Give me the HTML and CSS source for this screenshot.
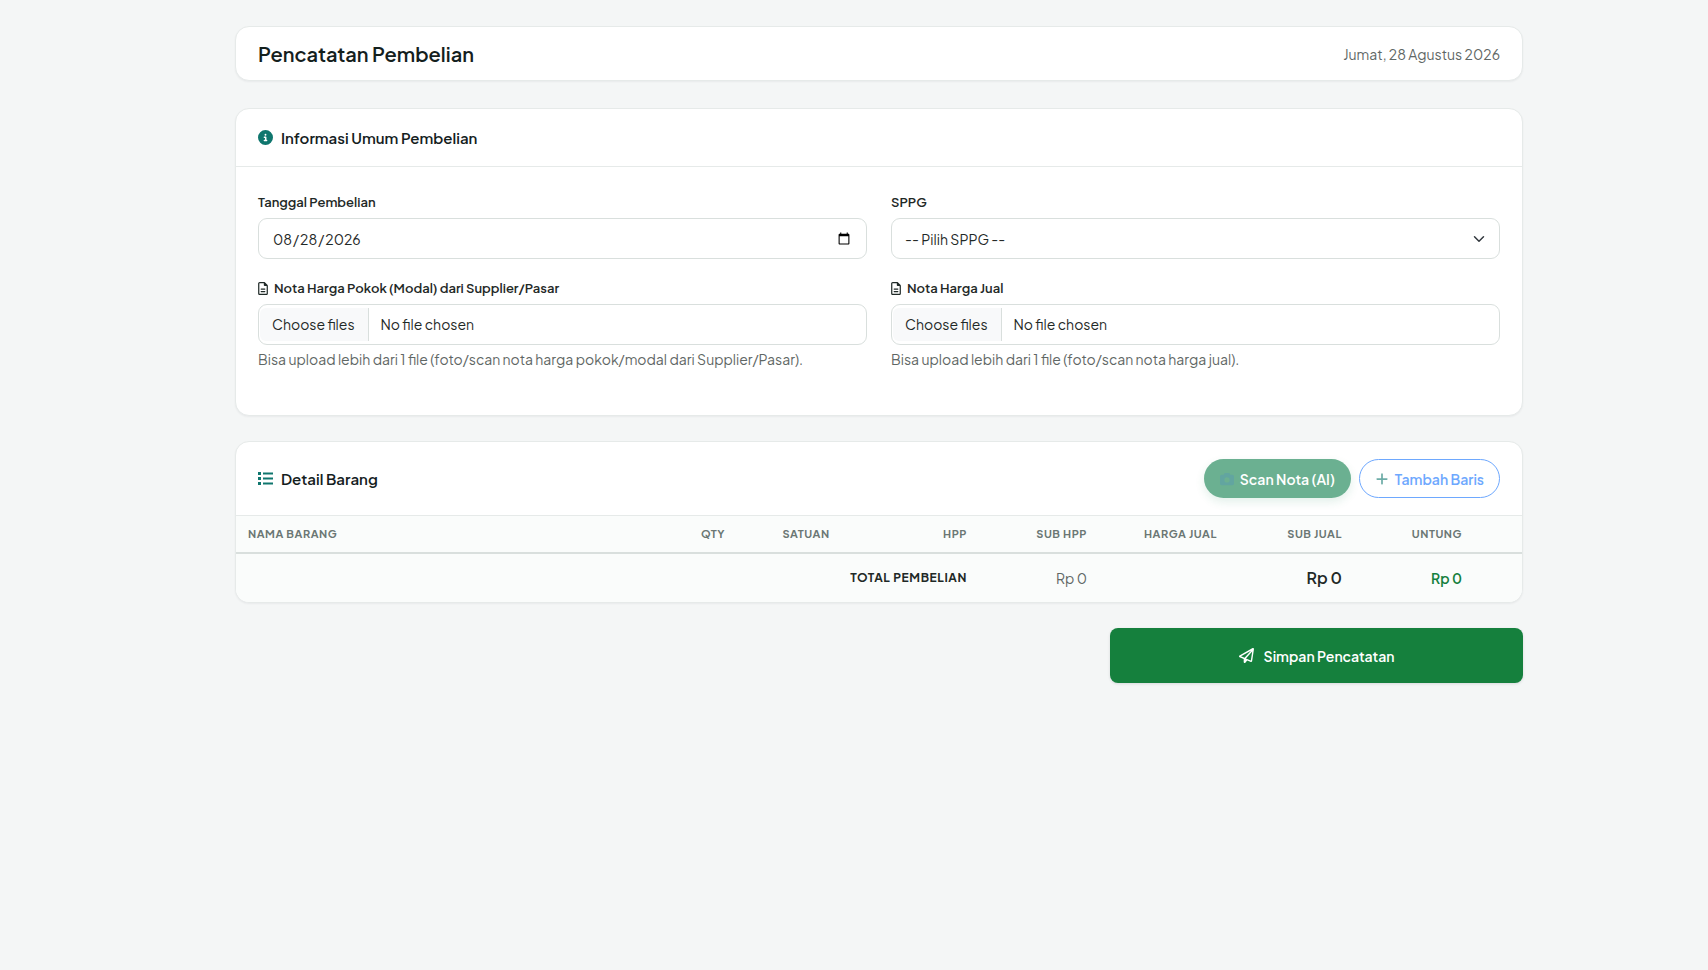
FILE: index.html
```html
<!DOCTYPE html>
<html lang="id">
<head>
    <meta charset="UTF-8">
    <meta name="viewport" content="width=device-width, initial-scale=1.0">
    <title>Pencatatan Pembelian</title>
    <link rel="stylesheet" href="styles.css">
</head>
<body>
    <main class="container">
        <header class="card page-header">
            <h1>Pencatatan Pembelian</h1>
            <span class="date">Jumat, 28 Agustus 2026</span>
        </header>

        <form class="form" action="#">
            <section class="card">
                <div class="card-header">
                    <h2>
                        <svg class="icon" viewBox="0 0 512 512"><path d="M256 512A256 256 0 1 0 256 0a256 256 0 1 0 0 512zM216 336h24V272H216c-13.3 0-24-10.7-24-24s10.7-24 24-24h48c13.3 0 24 10.7 24 24v88h8c13.3 0 24 10.7 24 24s-10.7 24-24 24H216c-13.3 0-24-10.7-24-24s10.7-24 24-24zm40-208a32 32 0 1 1 0 64 32 32 0 1 1 0-64z"/></svg>
                        Informasi Umum Pembelian
                    </h2>
                </div>
                <div class="card-body">
                    <div class="field">
                        <label for="tanggal">Tanggal Pembelian</label>
                        <input class="control" type="date" id="tanggal" value="2026-08-28">
                    </div>
                    <div class="field">
                        <label for="sppg">SPPG</label>
                        <select class="control" id="sppg">
                            <option>-- Pilih SPPG --</option>
                        </select>
                    </div>
                    <div class="field">
                        <label for="nota-pokok">
                            <svg class="icon-file" viewBox="0 0 384 512"><path d="M64 464c-8.8 0-16-7.2-16-16V64c0-8.8 7.2-16 16-16H224v80c0 17.7 14.3 32 32 32h80V448c0 8.8-7.2 16-16 16H64zM64 0C28.7 0 0 28.7 0 64V448c0 35.3 28.7 64 64 64H320c35.3 0 64-28.7 64-64V154.5c0-17-6.7-33.3-18.7-45.3L274.7 18.7C262.7 6.7 246.5 0 229.5 0H64zm56 256c-13.3 0-24 10.7-24 24s10.7 24 24 24H264c13.3 0 24-10.7 24-24s-10.7-24-24-24H120zm0 96c-13.3 0-24 10.7-24 24s10.7 24 24 24H264c13.3 0 24-10.7 24-24s-10.7-24-24-24H120z"/></svg>
                            Nota Harga Pokok (Modal) dari Supplier/Pasar
                        </label>
                        <div class="control file">
                            <span class="file-button">Choose files</span>
                            <span class="file-name">No file chosen</span>
                            <input type="file" id="nota-pokok" multiple>
                        </div>
                        <p class="help">Bisa upload lebih dari 1 file (foto/scan nota harga pokok/modal dari Supplier/Pasar).</p>
                    </div>
                    <div class="field">
                        <label for="nota-jual">
                            <svg class="icon-file" viewBox="0 0 384 512"><path d="M64 464c-8.8 0-16-7.2-16-16V64c0-8.8 7.2-16 16-16H224v80c0 17.7 14.3 32 32 32h80V448c0 8.8-7.2 16-16 16H64zM64 0C28.7 0 0 28.7 0 64V448c0 35.3 28.7 64 64 64H320c35.3 0 64-28.7 64-64V154.5c0-17-6.7-33.3-18.7-45.3L274.7 18.7C262.7 6.7 246.5 0 229.5 0H64zm56 256c-13.3 0-24 10.7-24 24s10.7 24 24 24H264c13.3 0 24-10.7 24-24s-10.7-24-24-24H120zm0 96c-13.3 0-24 10.7-24 24s10.7 24 24 24H264c13.3 0 24-10.7 24-24s-10.7-24-24-24H120z"/></svg>
                            Nota Harga Jual
                        </label>
                        <div class="control file">
                            <span class="file-button">Choose files</span>
                            <span class="file-name">No file chosen</span>
                            <input type="file" id="nota-jual" multiple>
                        </div>
                        <p class="help">Bisa upload lebih dari 1 file (foto/scan nota harga jual).</p>
                    </div>
                </div>
            </section>

            <section class="card">
                <div class="card-header">
                    <h2>
                        <svg class="icon" viewBox="0 0 15 15"><path d="M0 1h3v3H0zM0 6h3v3H0zM0 11h3v3H0zM5 1.500h10v2H5zM5 6.500h10v2H5zM5 11.500h10v2H5z"/></svg>
                        Detail Barang
                    </h2>
                    <div class="actions">
                        <button class="btn btn-scan" type="button" disabled>
                            <svg class="icon" viewBox="0 0 512 512"><path d="M149.1 64.8L138.7 96H64C28.7 96 0 124.7 0 160V416c0 35.3 28.7 64 64 64H448c35.3 0 64-28.7 64-64V160c0-35.3-28.7-64-64-64H373.3L362.9 64.8C356.4 45.2 338.1 32 317.4 32H194.6c-20.7 0-39 13.2-45.5 32.8zM256 192a96 96 0 1 1 0 192 96 96 0 1 1 0-192z"/></svg>
                            Scan Nota (AI)
                        </button>
                        <button class="btn btn-add" type="button" disabled>
                            <svg class="icon" viewBox="0 0 448 512"><path d="M256 80c0-17.7-14.3-32-32-32s-32 14.3-32 32V224H48c-17.7 0-32 14.3-32 32s14.3 32 32 32H192V432c0 17.7 14.3 32 32 32s32-14.3 32-32V288H400c17.7 0 32-14.3 32-32s-14.3-32-32-32H256V80z"/></svg>
                            Tambah Baris
                        </button>
                    </div>
                </div>
                <table>
                    <thead>
                        <tr>
                            <th class="col-name">Nama Barang</th>
                            <th class="col-qty">Qty</th>
                            <th class="col-unit">Satuan</th>
                            <th class="col-price">HPP</th>
                            <th class="col-sum">Sub HPP</th>
                            <th class="col-sell">Harga Jual</th>
                            <th class="col-price">Sub Jual</th>
                            <th class="col-sum">Untung</th>
                            <th class="col-action"></th>
                        </tr>
                    </thead>
                    <tfoot>
                        <tr>
                            <td colspan="4" class="total-label">Total Pembelian</td>
                            <td class="total-hpp">Rp 0</td>
                            <td></td>
                            <td class="total-jual">Rp 0</td>
                            <td class="total-untung">Rp 0</td>
                            <td></td>
                        </tr>
                    </tfoot>
                </table>
            </section>

            <button class="btn-save" type="submit">
                <svg class="icon" viewBox="0 0 512 512"><path d="M16.1 260.2c-22.6 12.9-20.5 47.3 3.6 57.3L160 376V479.3c0 18.1 14.6 32.7 32.7 32.7c9.7 0 18.9-4.3 25.1-11.8l62-74.3 123.9 51.6c18.9 7.9 40.8-4.5 43.9-24.7l64-416c1.9-12.1-3.4-24.3-13.5-31.2s-23.3-7.5-34-1.4l-448 256zm52.1 25.5L409.7 90.6 190.1 336l1.2 1L68.2 285.7zM403.3 425.4L236.7 355.9 450.8 116.6 403.3 425.4z"/></svg>
                Simpan Pencatatan
            </button>
        </form>
    </main>
</body>
</html>
```
FILE: styles.css
```css
* {
    box-sizing: border-box;
    margin: 0;
    padding: 0;
}
body {
    padding: 26px 0 26px 50px;
    background: #f4f6f6;
    color: #1f2927;
    font-family: "Plus Jakarta Sans", Inter, sans-serif;
    font-size: 14px;
    line-height: 20px;
}
input,
select,
button {
    font: inherit;
}
.container {
    max-width: 1288px;
    margin: 0 auto;
}
.card {
    background: #fff;
    border: 1px solid #e6eae9;
    border-radius: 14px;
    box-shadow: 0 1px 2px rgba(16, 24, 40, 0.05);
    overflow: hidden;
}
.page-header {
    display: flex;
    align-items: center;
    justify-content: space-between;
    padding: 12px 22px;
    margin-bottom: 27px;
}
h1 {
    color: #14201d;
    font-size: 20px;
    line-height: 29px;
    font-weight: 600;
}
.date {
    color: #5f6765;
}
.form {
    display: flex;
    flex-direction: column;
    gap: 25px;
}
.card-header {
    display: flex;
    align-items: center;
    justify-content: space-between;
    padding: 17px 22px;
    border-bottom: 1px solid #e6eae9;
}
h2 {
    display: flex;
    align-items: center;
    gap: 8px;
    color: #14201d;
    font-size: 15px;
    line-height: 23px;
    font-weight: 600;
}
.icon {
    width: 15px;
    height: 15px;
    fill: #0f766e;
}

/* form */
.card-body {
    display: grid;
    grid-template-columns: 1fr 1fr;
    gap: 19px 24px;
    padding: 25px 22px 46px;
}
.field label {
    display: flex;
    align-items: center;
    gap: 6px;
    margin-bottom: 6px;
    font-size: 13px;
    font-weight: 600;
}
.icon-file {
    width: 10px;
    height: 13px;
    fill: #1f2927;
}
.control {
    display: block;
    width: 100%;
    height: 41px;
    padding: 0 13px;
    border: 1px solid #d9dfdd;
    border-radius: 9px;
    background: #fff;
    color: #1f2927;
}
select.control {
    appearance: none;
    background: #fff url("data:image/svg+xml,%3csvg xmlns='http://www.w3.org/2000/svg' viewBox='0 0 16 16'%3e%3cpath fill='none' stroke='%23343a40' stroke-linecap='round' stroke-linejoin='round' stroke-width='2' d='m2 5 6 6 6-6'/%3e%3c/svg%3e") no-repeat right 14px center / 12px 12px;
}
.file {
    display: flex;
    align-items: center;
    position: relative;
    padding: 0 1px;
}
.file input {
    position: absolute;
    inset: 0;
    opacity: 0;
}
.file-button {
    padding: 6px 13px 7px 12px;
    border-right: 1px solid #d9dfdd;
    border-radius: 6px 0 0 6px;
    background: #f8f9fa;
}
.file-name {
    padding: 6px 12px 7px;
}
.help {
    margin-top: 4px;
    color: #5f6765;
}

/* buttons */
.actions {
    display: flex;
    gap: 8px;
}
.btn {
    display: flex;
    align-items: center;
    gap: 6px;
    height: 39px;
    padding: 0 15px;
    border: 1px solid transparent;
    border-radius: 20px;
    font-weight: 600;
}
.btn .icon {
    width: 14px;
    height: 14px;
}
.btn-scan {
    background: #6bb091;
    color: #fff;
    box-shadow: 0 4px 10px rgba(25, 135, 84, 0.12);
}
.btn-scan .icon {
    fill: #62a5a0;
}
.btn-add {
    background: #fff;
    border-color: #6ea8fe;
    color: #6ea8fe;
}
.btn-add .icon {
    fill: #6fada8;
}
.btn-save {
    display: flex;
    align-items: center;
    justify-content: center;
    gap: 10px;
    align-self: flex-end;
    width: 413px;
    max-width: 100%;
    height: 55px;
    border: 0;
    border-radius: 8px;
    background: #15803d;
    color: #fff;
    font-weight: 600;
    box-shadow: 0 1px 3px rgba(16, 24, 40, 0.12);
}
.btn-save .icon {
    fill: #fff;
}

/* table */
table {
    width: 100%;
    table-layout: fixed;
    border-spacing: 0;
    background: #fafcfb;
}
th {
    height: 38px;
    padding: 0 12px;
    border-bottom: 2px solid #d9dfdd;
    color: #6b7774;
    font-size: 11px;
    font-weight: 700;
    letter-spacing: 0.05em;
    text-align: right;
    text-transform: uppercase;
}
.col-name {
    text-align: left;
}
.col-qty {
    width: 90px;
    text-align: center;
}
.col-unit {
    width: 96px;
    text-align: center;
}
.col-price {
    width: 125px;
}
.col-sum {
    width: 120px;
}
.col-sell {
    width: 130px;
}
.col-action {
    width: 48px;
}
td {
    height: 48px;
    padding: 0 12px;
    text-align: right;
}
.total-label {
    font-size: 12px;
    font-weight: 700;
    letter-spacing: 0.05em;
    text-transform: uppercase;
}
.total-hpp {
    color: #5f6765;
}
.total-jual {
    font-size: 16px;
    font-weight: 600;
}
.total-untung {
    color: #15803d;
    font-weight: 600;
}
```
